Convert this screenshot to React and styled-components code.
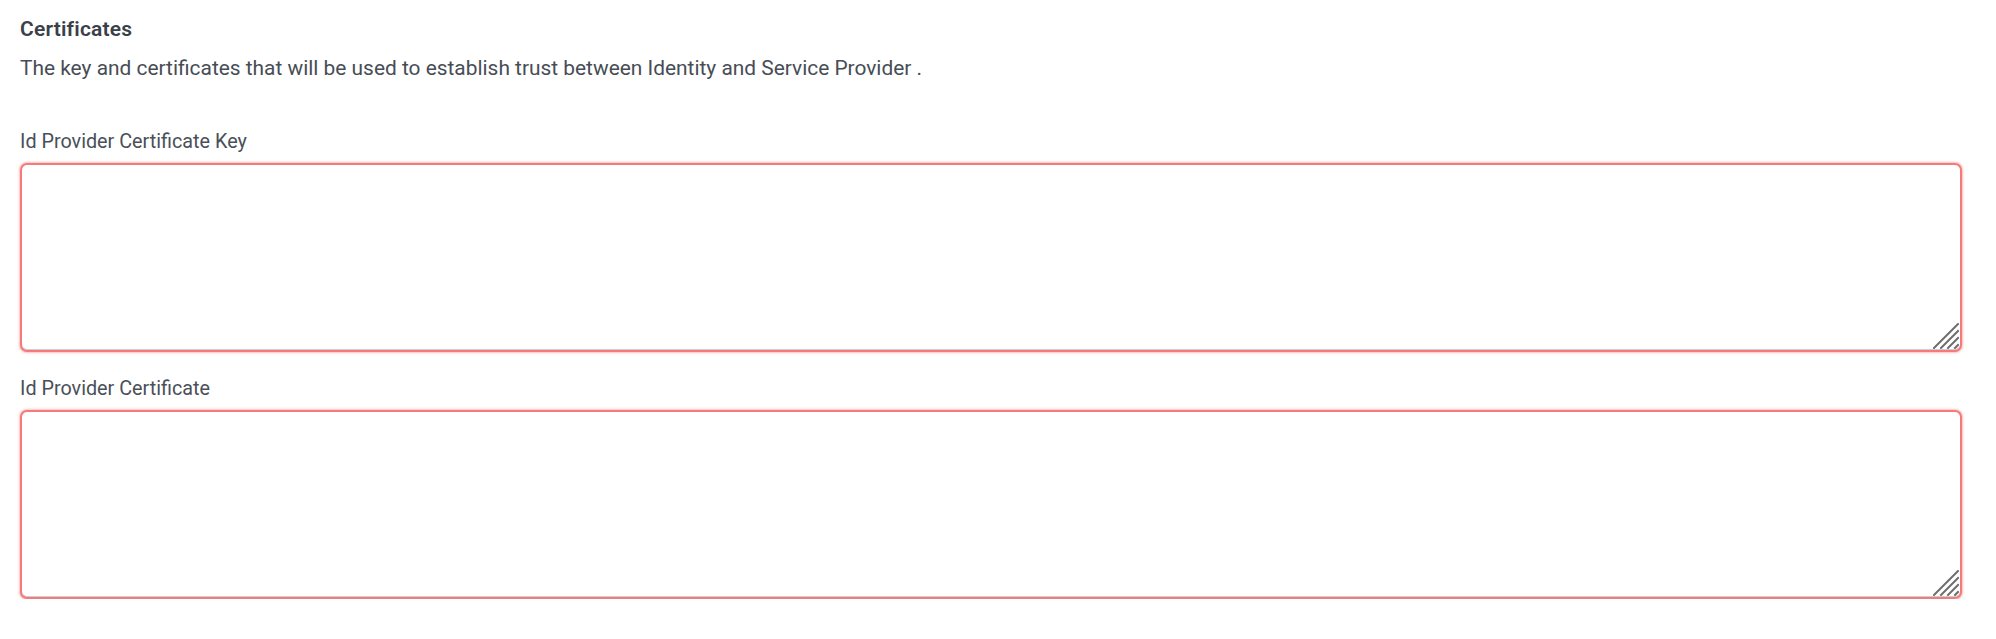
import React from 'react'
import styled, { createGlobalStyle } from 'styled-components'

const GlobalStyle = createGlobalStyle`
  html, body {
    margin: 0;
    padding: 0;
    background: #ffffff;
  }
  body {
    font-family: Roboto, "Noto Sans", Arial, sans-serif;
    color: #3d434b;
  }
`

function Grip() {
  return <GripIcon width='26' height='26' viewBox='0 0 26 26'>
    <path d='M1 25 L25 1 M8 25 L25 8 M15 25 L25 15 M22 25 L25 22'
      stroke='#6e6e6e' strokeWidth='2' strokeLinecap='square' fill='none' />
  </GripIcon>
}

function CertField({ id, label }) {
  return <Field>
    <Label htmlFor={id}>{label}</Label>
    <AreaWrap>
      <TextArea id={id} />
      <Grip />
    </AreaWrap>
  </Field>
}

export default function App() {
  return <Page>
    <GlobalStyle />
    <Heading>Certificates</Heading>
    <Description>
      The key and certificates that will be used to establish trust between Identity and Service Provider .
    </Description>
    <Fields>
      <CertField id='idp-key' label='Id Provider Certificate Key' />
      <CertField id='idp-cert' label='Id Provider Certificate' />
    </Fields>
  </Page>
}

const Page = styled.div`
padding: 16px 34px 0 20px;
display: flex;
flex-direction: column;
`

const Heading = styled.h2`
margin: 0;
font-size: 21px;
line-height: 26px;
font-weight: 600;
letter-spacing: 0.2px;
color: #3a4049;
`

const Description = styled.p`
margin: 13px 0 0;
font-size: 20.9px;
line-height: 26px;
font-weight: 400;
color: #474d55;
`

const Fields = styled.div`
display: flex;
flex-direction: column;
gap: 24px;
margin-top: 48px;
`

const Field = styled.div`
display: flex;
flex-direction: column;
gap: 8px;
`

const Label = styled.label`
font-size: 19.8px;
line-height: 26px;
color: #4a5058;
`

const AreaWrap = styled.div`
position: relative;
display: flex;
`

const TextArea = styled.textarea`
box-sizing: border-box;
width: 100%;
height: 189px;
margin: 0;
padding: 10px 12px;
border: 2px solid #f67a7a;
border-radius: 7px;
box-shadow: 0 0 2px 1px rgba(248, 113, 113, 0.45), inset 0 -1px 0 #c9ced6;
font-family: Roboto, sans-serif;
font-size: 16px;
color: #3d434b;
background: #fff;
outline: none;
resize: none;
`

const GripIcon = styled.svg`
position: absolute;
right: 3px;
bottom: 3px;
pointer-events: none;
`
